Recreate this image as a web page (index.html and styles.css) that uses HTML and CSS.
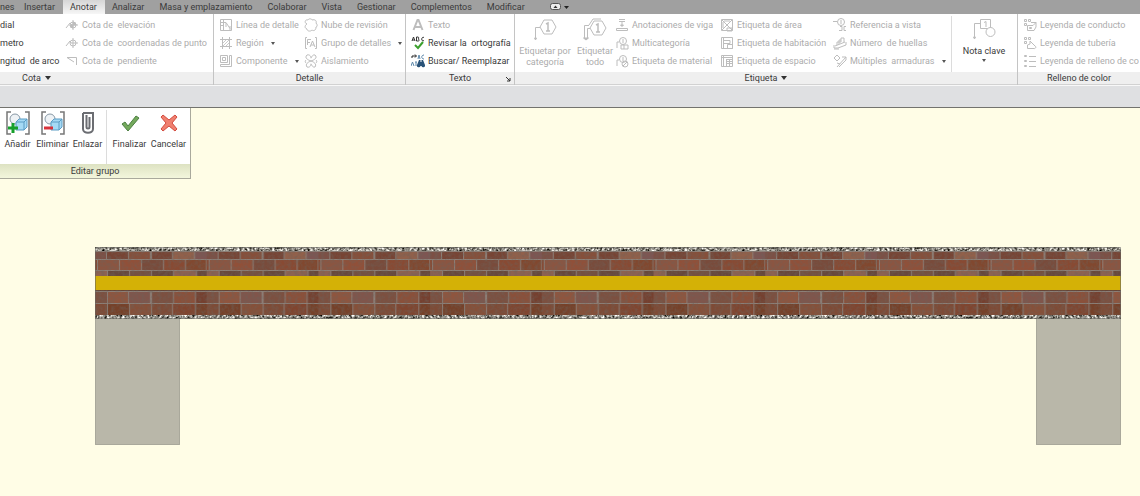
FILE: index.html
```html
<!DOCTYPE html>
<html lang="es">
<head>
<meta charset="utf-8">
<title>Anotar - Editar grupo</title>
<link rel="stylesheet" href="styles.css">
</head>
<body>
<nav class="tabs">
  <button class="tab tab-first">nes</button>
  <button class="tab">Insertar</button>
  <button class="tab active">Anotar</button>
  <button class="tab">Analizar</button>
  <button class="tab">Masa y emplazamiento</button>
  <button class="tab">Colaborar</button>
  <button class="tab">Vista</button>
  <button class="tab">Gestionar</button>
  <button class="tab">Complementos</button>
  <button class="tab">Modificar</button>
  <button class="toggle" aria-label="Minimizar cinta">
    <svg width="20" height="8" viewBox="0 0 20 8"><rect x=".5" y=".5" width="10" height="6" rx="2" fill="#eee" stroke="#555"/><path d="M3.500 5 5.500 2.500 7.500 5z" fill="#333"/><path d="M14 3h5l-2.500 3z" fill="#222"/></svg>
  </button>
</nav>

<main>
<div class="ribbon">
  <section class="panel p-cota">
    <div class="tools">
      <div class="col c-cut">
        <button class="tool">dial</button>
        <button class="tool">metro</button>
        <button class="tool">ngitud  de arco</button>
      </div>
      <div class="col">
        <button class="tool" disabled><svg class="ic" viewBox="0 0 14 14"><path d="M1 10 5 5l2 2h6"/><circle cx="8" cy="7" r="3"/><path d="M8 2v10"/><path class="f" d="M8 7V4a3 3 0 0 1 3 3zM8 7v3a3 3 0 0 1-3-3z"/></svg>Cota de  elevación</button>
        <button class="tool" disabled><svg class="ic" viewBox="0 0 14 14"><path d="M1 10 5 5l1 2h7"/><circle cx="8" cy="7" r="3"/><path d="M8 2v10"/></svg>Cota de  coordenadas de punto</button>
        <button class="tool" disabled><svg class="ic" viewBox="0 0 14 14"><path d="M2 3.500h9.500V11M2 3.500 9 8"/></svg>Cota de  pendiente</button>
      </div>
    </div>
    <h2 class="title">Cota <i class="caret"></i></h2>
  </section>

  <section class="panel p-detalle">
    <div class="tools">
      <div class="col c-linea">
        <button class="tool" disabled><svg class="ic" viewBox="0 0 14 14"><path d="M1.500 1.500h11v11h-11zM4.500 2v10M2 4.500h2M2 7.500h2M5 4.500h2l4 6M11 12V8M7 5v4"/></svg>Línea de detalle</button>
        <button class="tool" disabled><svg class="ic" viewBox="0 0 14 14"><path d="M1 3.500h12M1 10.500h12M3.500 1v12M10.500 1v12"/><path d="M4 7l3-3M4 10l6-6M7 10l3-3" stroke-width=".8"/></svg>Región <i class="dot"></i></button>
        <button class="tool" disabled><svg class="ic" viewBox="0 0 14 14"><path d="M1.500 1.500h7v7h-7zM3.500 3.500h3v3h-3zM10.500 1.500h2v11h-11v-2h9z"/></svg>Componente <i class="dot"></i></button>
      </div>
      <div class="col">
        <button class="tool" disabled><svg class="ic" viewBox="0 0 14 14"><path d="M3 6C0 5 1 1 4 2c1-2 4-1 4 0 3-1 5 1 4 3 2 2 1 4 0 4 0 4-3 4-4 3-2 2-5 1-5-1-3-1-2-4 0-5"/></svg>Nube de revisión</button>
        <button class="tool" disabled><svg class="ic" viewBox="0 0 14 14"><path d="M3 1.500H1.500v11H3M11 1.500h1.500v11H11M3.500 9V3.500H7M3.500 6.500H6M6 11l2.500-6L11 11M7 9h3"/></svg>Grupo de detalles <i class="dot"></i></button>
        <button class="tool" disabled><svg class="ic" viewBox="0 0 14 14"><path d="M3 1c-3 3 1 5 4 6s6 3 4 6M11 1c3 3-1 5-4 6s-6 3-4 6M3 1c3-1 4 2 4 3s1-4 4-3M3 13c3 1 4-2 4-3s1 4 4 3M2 6c-1 1-1 2 0 3M12 6c1 1 1 2 0 3"/></svg>Aislamiento</button>
      </div>
    </div>
    <h2 class="title">Detalle</h2>
  </section>

  <section class="panel p-texto">
    <div class="tools">
      <div class="col">
        <button class="tool" disabled><svg class="ic" viewBox="0 0 14 14"><path d="M2.500 12 6.500 2h1l4 10M4 9h6" stroke-width="2"/></svg>Texto</button>
        <button class="tool"><svg class="ic" viewBox="0 0 14 14"><path d="m1 5 1.500-4L4 5M1.500 4h2M5.500 1v4H7c2 0 1-2 0-2 1 0 1-2 0-2zM13 1.500c-3-1.500-3 5 0 3" stroke="#333"/><path d="m4 9 3 3 5-6" stroke="#3ca02e" stroke-width="2"/></svg>Revisar la  ortografía</button>
        <button class="tool"><svg class="ic" viewBox="0 0 14 14"><path d="M1 4V2h4M4 .5 5.500 2 4 3.500" stroke="#222"/><path d="m7 5 1-4 1 4M13 1c-3 0-3 4 0 4M0 12l1.500-4L3 12M5 8v4M4 8h2" stroke="#5c88ab"/><path d="M8 6h1.500v2h1V6H12l2 5a1.800 1.800 0 1 1-3.500 1h-1A1.800 1.800 0 1 1 6 11z" fill="#2a5378" stroke="none"/></svg>Buscar/ Reemplazar</button>
      </div>
    </div>
    <h2 class="title">Texto<button class="launch" aria-label="Tipos de texto"><svg width="6" height="6" viewBox="0 0 6 6"><path d="M1 1l4 4M5 2v3H2" fill="none" stroke="#333"/></svg></button></h2>
  </section>

  <section class="panel p-etiqueta">
    <div class="tools">
      <button class="big b-cat" disabled><svg class="lg" viewBox="0 0 26 30"><path d="M3.500 23V11.500H8"/><path class="f" d="M2.500 22h2l-1 2z"/><path d="m8 11 4-7h8l4 7-4 7h-8z"/><path d="m14 8 2-1v8M14 15h4" stroke-width="1.500"/></svg>Etiquetar por<br>categoría</button>
      <button class="big b-todo" disabled><svg class="lg" viewBox="0 0 26 30"><path d="M2.500 23V9.500H7M5.500 23V12.500H8M7 9l4-6h8"/><path class="f" d="M1.500 22h5l-2.500 2z"/><path d="m8 12 4-7h8l4 7-4 7h-8z"/><path d="m14 9 2-1v8M14 16h4" stroke-width="1.500"/></svg>Etiquetar<br>todo</button>
      <div class="col c-viga">
        <button class="tool" disabled><svg class="ic" viewBox="0 0 14 14"><path d="M4 1.500h6M4 3.500h6M7 4v4M1.500 10.500h11v2h-11z"/><path class="f" d="M5.500 7h3L7 8.500z"/></svg>Anotaciones de viga</button>
        <button class="tool" disabled><svg class="ic" viewBox="0 0 14 14"><path d="M2 12V6h2"/><circle cx="8" cy="5" r="3.500"/><path d="M8 3v4M6 9h7v4H6zM9 9v4"/></svg>Multicategoría</button>
        <button class="tool" disabled><svg class="ic" viewBox="0 0 14 14"><path d="M2 12V6h2"/><circle cx="8" cy="5" r="3.500"/><path d="M8 3v4"/><circle cx="10" cy="10" r="3"/><path d="m8 12 4-4"/></svg>Etiqueta de material</button>
      </div>
      <div class="col c-area">
        <button class="tool" disabled><svg class="ic" viewBox="0 0 14 14"><path d="M1.500 1.500h11v11h-11zM2 2l10 10M12 2 2 12M3 4v6M4 3h6M7 10h5v3H7z"/></svg>Etiqueta de área</button>
        <button class="tool" disabled><svg class="ic" viewBox="0 0 14 14"><path d="M1.500 1.500h11v11h-11zM3.500 2v10M4 4.500h6v3H4M7.500 8.500h5v4h-5z"/></svg>Etiqueta de habitación</button>
        <button class="tool" disabled><svg class="ic" viewBox="0 0 14 14"><path d="M1.500 1.500h11v11h-11zM1 3.500h12M3.500 2v10M6 5.500h6M6 7.500h6M6 9.500h6M6.500 5v7M9.500 5v7"/></svg>Etiqueta de espacio</button>
      </div>
      <div class="col c-ref">
        <button class="tool" disabled><svg class="ic" viewBox="0 0 14 14"><path d="M0 3.500h4"/><circle cx="8" cy="4" r="3.500"/><path d="M8 2v4M7 8.500h2v4H6M13 8.500h-2v4h2"/></svg>Referencia a vista</button>
        <button class="tool" disabled><svg class="ic" viewBox="0 0 14 14"><path d="M1 9v3h4l8-3V6M2 10l10-4M4 9V6h2V4h2V2h3v4M6 8V6h2V4M1 13h5"/></svg>Número  de huellas</button>
        <button class="tool" disabled><svg class="ic" viewBox="0 0 14 14"><path d="m1 4 3-3 3 3-3 3zM4 13 13 3M6 13l7-7M9 3h4v3M4 9l3 1"/></svg>Múltiples  armaduras <i class="dot"></i></button>
      </div>
      <button class="big b-nota"><svg class="lg" viewBox="0 0 26 30"><path d="M3.500 22V7.500H9"/><path class="f" d="M2.500 21h2l-1 2z"/><path d="M9.500 3.500h10v9h-10zM13 6.500l2-1V11"/><circle cx="19.500" cy="16" r="4.500" fill="#fff"/></svg>Nota clave<i class="dot"></i></button>
    </div>
    <h2 class="title">Etiqueta <i class="caret"></i></h2>
  </section>

  <section class="panel p-relleno">
    <div class="tools">
      <div class="col">
        <button class="tool" disabled><svg class="ic" viewBox="0 0 14 14"><path d="M1.500 1.500h2v2h-2zM5.500 1.500h2v2h-2zM1.500 5.500h2v2h-2zM8 4.500h5V9l-2 3.500H4.500v-5H10l3-3M6.500 9.500h2v1h-2z"/></svg>Leyenda de conducto</button>
        <button class="tool" disabled><svg class="ic" viewBox="0 0 14 14"><path d="M1.500 1.500h2v2h-2zM5.500 1.500h2v2h-2zM1.500 5.500h2v2h-2zM7 5l5 5c2 1 0 3-1 2.500H4.500V9L7 8z"/></svg>Leyenda de tubería</button>
        <button class="tool" disabled><svg class="ic" viewBox="0 0 14 14"><path d="M1.500 1.500h2v1h-2zM1.500 6.500h2v1h-2zM1.500 11.500h2v1h-2zM6 2.500h7M6 7.500h7M6 12.500h7"/></svg>Leyenda de relleno de co</button>
      </div>
    </div>
    <h2 class="title">Relleno de color</h2>
  </section>
</div>
<div class="options"></div>

<div class="canvas">
  <section class="group">
    <div class="group-tools">
      <button class="gbtn"><svg class="gi" viewBox="0 0 24 24"><path d="M5 1H1v22h4M19 1h4v22h-4" fill="none" stroke="#777" stroke-width="1.500"/><circle cx="9" cy="8" r="5" fill="#eef2f5" stroke="#8898a5"/><path d="m10 11 3-3h8v8l-3 3h-8z" fill="#a5daf5" stroke="#5a9cc4"/><path d="M10 11h8v8M18 11l3-3" fill="none" stroke="#5a9cc4"/><path d="M7 12v10M2 17h10" stroke="#16a02c" stroke-width="3"/></svg>Añadir</button>
      <button class="gbtn"><svg class="gi" viewBox="0 0 24 24"><path d="M5 1H1v22h4M19 1h4v22h-4" fill="none" stroke="#777" stroke-width="1.500"/><circle cx="9" cy="8" r="5" fill="#eef2f5" stroke="#8898a5"/><path d="m10 11 3-3h8v8l-3 3h-8z" fill="#a5daf5" stroke="#5a9cc4"/><path d="M10 11h8v8M18 11l3-3" fill="none" stroke="#5a9cc4"/><path d="M3 17h9" stroke="#d8323a" stroke-width="3"/></svg>Eliminar</button>
      <button class="gbtn"><svg class="gi" viewBox="0 0 24 24"><path d="M7 2v16c0 5 10 5 10 0V2H7M10.500 4v12c0 2 3 2 3 0V6" fill="none" stroke="#6b6d72" stroke-width="2"/></svg>Enlazar</button>
      <span class="rule"></span>
      <button class="gbtn"><svg class="gi" viewBox="0 0 24 24"><path d="m4 13 3-2 3 4 8-10 3 2-11 13z" fill="#74a95c" stroke="#4c7f42"/></svg>Finalizar</button>
      <button class="gbtn"><svg class="gi" viewBox="0 0 24 24"><path d="m4 6 2-2 6 5 6-5 2 2-5 6 5 6-2 2-6-5-6 5-2-2 5-6z" fill="#f0806f" stroke="#d34b3f"/></svg>Cancelar</button>
    </div>
    <h2 class="group-title">Editar grupo</h2>
  </section>

  <svg class="wall" viewBox="0 0 1026 198" role="img" aria-label="Alzado de muro de ladrillo">
    <defs>
      <filter id="grain" x="0" y="0" width="100%" height="100%">
        <feTurbulence type="fractalNoise" baseFrequency=".3" numOctaves="3" seed="4"/>
        <feColorMatrix values="0 0 0 0 .15  0 0 0 0 .12  0 0 0 0 .1  1 0 0 0 -.36"/>
      </filter>
      <filter id="gravel" x="0" y="0" width="100%" height="100%" color-interpolation-filters="sRGB">
        <feTurbulence type="fractalNoise" baseFrequency=".4" numOctaves="2" seed="9"/>
        <feColorMatrix values="1.700 0 0 0 -.27  1.700 0 0 0 -.28  1.700 0 0 0 -.31  0 0 0 0 1"/>
      </filter>
      <pattern id="upper" width="111.700" height="25" patternUnits="userSpaceOnUse" y="4">
        <rect width="112" height="25" fill="#8d8078"/>
        <path fill="#7c5045" d="M0 1h11v7H0z"/><path fill="#774434" d="M12 1h21v7H12zM57 1h20v7H57z"/><path fill="#864f3a" d="M34 1h21v7H34z"/><path fill="#91604a" d="M78 1h21v7H78z"/><path fill="#7e5552" d="M100 1h12v7h-12z"/>
        <path fill="#884a33" d="M0 9h2v10H0zM69 9h21v10H69z"/><path fill="#8b5541" d="M3 9h21v10H3z"/><path fill="#905039" d="M25 9h21v10H25z"/><path fill="#794b3b" d="M47 9h21v10H47z"/><path fill="#81482f" d="M91 9h20v10H91z"/>
        <path fill="#8d6251" d="M0 20h12v5H0zM79 20h22v5H79z"/><path fill="#68483b" d="M13 20h21v5H13zM57 20h21v5H57zM102 20h10v5h-10z"/><path fill="#75503f" d="M35 20h21v5H35z"/>
      </pattern>
      <pattern id="lower" width="111.700" height="25" patternUnits="userSpaceOnUse" y="43">
        <rect width="112" height="25" fill="#8d8078"/>
        <path fill="#654435" d="M0 0h112v1H0z"/>
        <path fill="#7c5040" d="M0 2h12v11H0zM57 2h21v11H57z"/><path fill="#8f553e" d="M13 2h20v11H13z"/><path fill="#80554b" d="M34 2h21v11H34z"/><path fill="#8a503a" d="M79 2h21v11H79z"/><path fill="#75402f" d="M101 2h11v11h-11z"/>
        <path fill="#7e4b36" d="M0 14h12v11H0zM57 14h20v11H57z"/><path fill="#764129" d="M13 14h21v11H13zM101 14h11v11h-11z"/><path fill="#865039" d="M35 14h21v11H35z"/><path fill="#80452f" d="M78 14h22v11H78z"/>
      </pattern>
    </defs>
    <path d="M0 72h85v126H0zM941 72h85v126h-85z" fill="#b9b7a9"/>
    <path d="M.5 72v125.500H84.500V72M941.500 72v125.500h84V72" fill="none" stroke="#a9a89b"/>
    <path d="M0 4h1026v25H0z" fill="url(#upper)"/>
    <path d="M0 43h1026v25H0z" fill="url(#lower)"/>
    <rect y="4" width="1026" height="64" filter="url(#grain)"/>
    <rect width="1026" height="4" filter="url(#gravel)"/>
    <rect y="68" width="1026" height="4" filter="url(#gravel)"/>
    <path d="M0 29h1026v14H0z" fill="#d4b106"/>
    <path d="M.5.5h1025v71H.5z" fill="none" stroke="#68665f" stroke-opacity=".6"/>
  </svg>
</div>
</main>
</body>
</html>
```

FILE: styles.css
```css
* { box-sizing: border-box; }

body {
  margin: 0;
  min-height: 100vh;
  background: #fffde6;
  color: #3a3a3a;
  font: 9px/12px Roboto, "Noto Sans", sans-serif;
  overflow-x: hidden;
}

button {
  margin: 0;
  padding: 0;
  border: 0;
  background: none;
  color: inherit;
  font: inherit;
  white-space: pre;
}

h2 { margin: 0; font: inherit; }

.tabs {
  display: flex;
  height: 14px;
  background: #a0a0a0;
}
.tab { padding: 0 8px 0 7px; flex: none; }
.tab-first { padding: 0; width: 17px; text-align: left; }
.tab.active { background: linear-gradient(#d6d6d6, #f6f6f6); }
.toggle { margin-left: 17px; display: flex; align-items: center; }

.ribbon {
  display: flex;
  height: 72px;
  background: #fff;
  border-bottom: 1px solid #f8f8f8;
}
.panel {
  display: flex;
  flex-direction: column;
  flex: none;
  border-right: 1px solid #c4c4c4;
  overflow: hidden;
}
.p-cota { width: 214px; }
.p-detalle { width: 192px; }
.p-texto { width: 109px; }
.p-etiqueta { width: 503px; }
.p-relleno { flex: 1 1 0; border-right: 0; }

.tools { display: flex; flex: 1; padding: 2px 0 0 5px; }
.col { display: flex; flex-direction: column; }
.tool {
  display: flex;
  align-items: center;
  gap: 3px;
  height: 18px;
}
.p-cota .tools { padding-left: 0; }
.c-cut { width: 65px; }
.c-linea { width: 85px; }
.c-viga { width: 105px; }
.c-area { width: 113px; }
.c-ref { width: 118px; }
.p-etiqueta .tools { padding-left: 0; }

button:disabled { color: #acacac; }
.ic { width: 14px; height: 14px; flex: none; }
.ic, .lg { fill: none; stroke: #bdbdbd; }
.f { fill: #bdbdbd; }
.big {
  display: flex;
  flex-direction: column;
  align-items: center;
  line-height: 11px;
}
.b-cat { width: 60px; }
.b-todo { width: 40px; }
.b-nota { width: 65px; border-left: 1px solid #dcdcdc; }
.lg { width: 26px; height: 30px; flex: none; }

.title {
  display: flex;
  align-items: center;
  justify-content: center;
  gap: 4px;
  height: 13px;
  background: #efefef;
  border-bottom: 1px solid #d2d2d2;
  position: relative;
}
.p-cota .title { padding-right: 140px; }
.launch { position: absolute; right: 3px; bottom: 2px; display: flex; }
.caret {
  border: 3px solid transparent;
  border-top: 4px solid #333;
  border-bottom: 0;
}
.dot {
  margin-left: 2px;
  border: 2px solid transparent;
  border-top: 3px solid #555;
  border-bottom: 0;
}
.big .dot { margin: 2px 0 0; }

.options {
  height: 22px;
  background: #dfe0e2;
  border-bottom: 1px solid #73736e;
}

.group {
  width: 191px;
  background: #fff;
  border: solid #a9a99c;
  border-width: 0 1px 1px 0;
}
.group-tools { display: flex; height: 56px; padding-top: 2px; }
.gbtn {
  display: flex;
  flex-direction: column;
  align-items: center;
  gap: 2px;
  width: 35px;
}
.rule { width: 1px; background: #dcdcdc; margin: 0 3px 0 1px; }
.rule ~ .gbtn { width: 39px; }
.gi { width: 24px; height: 26px; }
.group-title {
  height: 14px;
  line-height: 14px;
  text-align: center;
  background: linear-gradient(#dde2c2, #f3f6dc);
}

.wall {
  display: block;
  width: 90%;
  margin: 68px 0 0 95px;
}
```
